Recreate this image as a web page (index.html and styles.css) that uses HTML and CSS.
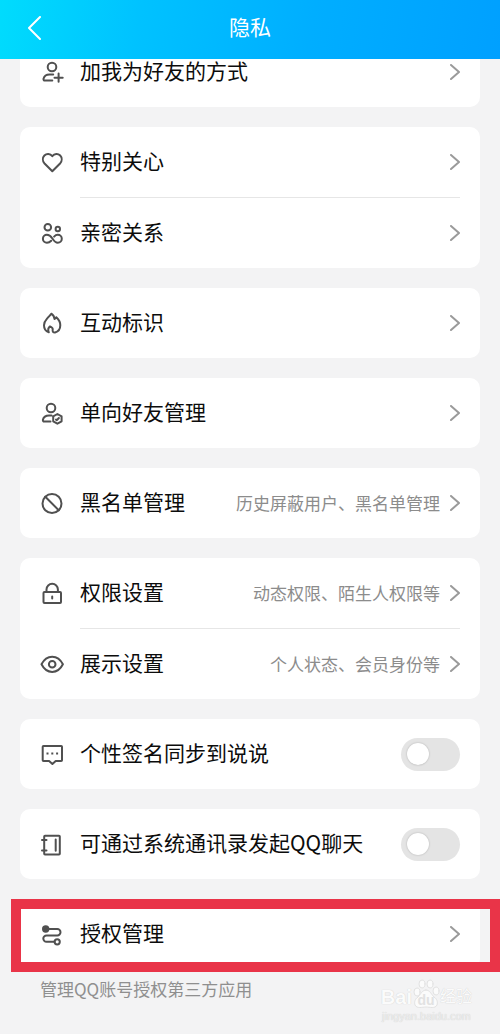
FILE: index.html
```html
<!DOCTYPE html>
<html lang="zh-CN">
<head>
  <meta charset="UTF-8">
  <meta name="viewport" content="width=device-width, initial-scale=1.0">
  <title>隐私</title>
  <link rel="stylesheet" href="styles.css">
</head>
<body>

  <svg class="sprite" aria-hidden="true">
    <symbol id="arrow" viewBox="0 0 10 16"><path d="M1 1l8 7-8 7"/></symbol>
  </svg>

  <!-- 顶部导航 -->
  <header class="header">
    <button class="back-button" type="button" aria-label="返回">
      <svg viewBox="0 0 14 24"><path d="M13 1L2 12l11 11"/></svg>
    </button>
    <h1>隐私</h1>
  </header>

  <!-- 设置列表 -->
  <main class="settings">
    <section class="card">
      <a class="row" href="#">
        <svg class="icon" viewBox="0 0 24 24"><circle cx="12" cy="7" r="4.300"/><path d="M13.200 14.600H9.500c-3 0-5.300 1.700-6 4.200-.2 1 .4 1.700 1.300 1.700h7.500M18.600 13.600v8.200M14.500 17.700h8.200"/></svg>
        <span class="label">加我为好友的方式</span>
        <svg class="arrow"><use href="#arrow"/></svg>
      </a>
    </section>

    <section class="card">
      <a class="row" href="#">
        <svg class="icon" viewBox="0 0 24 24"><path d="M12.300 21.200L4.300 13.200C2.500 11 2.400 7.600 4.400 5.500c2.200-2.300 5.700-2.200 7.900.6 2.200-2.800 5.700-2.900 7.900-.6 2 2.100 1.900 5.500.1 7.700z"/></svg>
        <span class="label">特别关心</span>
        <svg class="arrow"><use href="#arrow"/></svg>
      </a>
      <a class="row" href="#">
        <svg class="icon" viewBox="0 0 24 24"><circle cx="7.800" cy="6.200" r="3.300"/><circle cx="17.800" cy="8" r="2.200"/><path d="M11.200 19.800c-1.200 1.300-2.500 2-4.300 2a4 4 0 0 1 0-8c2.500 0 4 1.600 5.500 3.700 1.500 2.300 3 4.300 5.400 4.300a4 4 0 0 0 0-8c-1.600 0-2.700.7-3.700 1.800"/></svg>
        <span class="label">亲密关系</span>
        <svg class="arrow"><use href="#arrow"/></svg>
      </a>
    </section>

    <section class="card">
      <a class="row" href="#">
        <svg class="icon" viewBox="0 0 24 24"><path d="M8.800 21.300C5.500 20.200 4 17.300 4 14.200c0-3.500 1.600-5 3.400-7C8.800 5.500 10.300 4.300 11.300 2.700c2 1.300 3 3 3.200 5.300.9-.3 1.400-.9 1.800-1.800 2.500 2.200 4 4.800 4 8 0 3.600-1.900 6.300-5.300 7.300-1.900.1-2.700-1-2.300-2.700.3-1.400-.7-2.600-2.700-3.400-1.700 1.300-2.300 3.300-1.200 5.900z"/></svg>
        <span class="label">互动标识</span>
        <svg class="arrow"><use href="#arrow"/></svg>
      </a>
    </section>

    <section class="card">
      <a class="row" href="#">
        <svg class="icon" viewBox="0 0 24 24"><circle cx="11" cy="7" r="4.300"/><path d="M11.500 14.500H9c-3.300 0-5.500 1.800-6.100 4.300-.2 1 .4 1.700 1.300 1.700h6.300M17.400 13l4.200 2.400v4.900l-4.200 2.400-4.200-2.400v-4.900z"/><path d="M16 18.600l.9.600 2-2.200"/></svg>
        <span class="label">单向好友管理</span>
        <svg class="arrow"><use href="#arrow"/></svg>
      </a>
    </section>

    <section class="card">
      <a class="row" href="#">
        <svg class="icon" viewBox="0 0 24 24"><circle cx="12" cy="12.500" r="9.500"/><path d="M5.300 5.800l13.400 13.400"/></svg>
        <span class="label">黑名单管理</span>
        <span class="note">历史屏蔽用户、黑名单管理</span>
        <svg class="arrow"><use href="#arrow"/></svg>
      </a>
    </section>

    <section class="card">
      <a class="row" href="#">
        <svg class="icon" viewBox="0 0 24 24"><rect x="3.500" y="11" width="17.500" height="11" rx="1"/><path d="M6.500 11V8.500a5.700 5.700 0 0 1 11.400 0V11M12.200 15.500v2"/></svg>
        <span class="label">权限设置</span>
        <span class="note">动态权限、陌生人权限等</span>
        <svg class="arrow"><use href="#arrow"/></svg>
      </a>
      <a class="row" href="#">
        <svg class="icon" viewBox="0 0 24 24"><path d="M1.500 12.300C4 7.300 7.800 4.700 12.200 4.700s8.200 2.600 10.700 7.600c-2.500 5-6.300 7.600-10.700 7.600S4 17.300 1.500 12.300z"/><circle cx="12.200" cy="12.300" r="3.300"/></svg>
        <span class="label">展示设置</span>
        <span class="note">个人状态、会员身份等</span>
        <svg class="arrow"><use href="#arrow"/></svg>
      </a>
    </section>

    <section class="card">
      <div class="row">
        <svg class="icon" viewBox="0 0 24 24"><path d="M3.500 4h17.700q.8 0 .8.800v13.400q0 .8-.8.800h-5.500l-3.300 3-3.300-3H3.500q-.8 0-.8-.8V4.800q0-.8.800-.8z"/><path class="dots" d="M6.500 11.500h2M11.300 11.500h2M16.100 11.500h2"/></svg>
        <label class="label" for="syncSign">个性签名同步到说说</label>
        <input class="switch" type="checkbox" id="syncSign">
      </div>
    </section>

    <section class="card">
      <div class="row">
        <svg class="icon" viewBox="0 0 24 24"><path d="M5 3.800h14q.8 0 .8.800v17.100q0 .8-.8.800H5q-.8 0-.8-.8V4.600q0-.8.800-.8zM15.700 7.500v11.300M2 8h4.500M2 18.500h4.500"/></svg>
        <label class="label" for="contactChat">可通过系统通讯录发起QQ聊天</label>
        <input class="switch" type="checkbox" id="contactChat">
      </div>
    </section>

    <section class="card marked">
      <a class="row" href="#">
        <svg class="icon" viewBox="0 0 24 24"><circle class="solid" cx="5.700" cy="7" r="2.700"/><path d="M6 7h11.300a3.200 3.200 0 0 1 0 6.400H6.500a3.200 3.200 0 0 0 0 6.400h8"/><circle cx="17.200" cy="19.800" r="2.600"/></svg>
        <span class="label">授权管理</span>
        <svg class="arrow"><use href="#arrow"/></svg>
      </a>
    </section>
  </main>

  <!-- 底部说明和水印 -->
  <footer class="footer">
    <p class="hint">管理QQ账号授权第三方应用</p>
    <div class="watermark">
      <div class="brand">
        <span>Bai</span>
        <span class="paw">
          <svg viewBox="0 0 28 30"><ellipse cx="5" cy="13" rx="3" ry="4"/><ellipse cx="10" cy="5" rx="3" ry="4"/><ellipse cx="18" cy="5" rx="3" ry="4"/><ellipse cx="24" cy="12" rx="3" ry="4"/><path d="M14 11c4 0 5 4 8 7 3 2 4 5 3 8-2 4-7 2-11 2s-9 2-11-2c-1-3 0-6 3-8 3-3 4-7 8-7z"/></svg>
          <span class="du">du</span>
        </span>
        <span class="jingyan">经验</span>
      </div>
      <div class="site">jingyan.baidu.com</div>
    </div>
  </footer>

</body>
</html>
```

FILE: styles.css
```css
/* ===== General Styles ===== */
* {
  box-sizing: border-box;
}

body {
  margin: 0;
  min-height: 100vh;
  background-color: #f3f3f4;
  color: #0c0c0c;
  font-family: "Noto Sans CJK SC", sans-serif;
}

svg {
  fill: none;
  stroke-linecap: round;
  stroke-linejoin: round;
}

.sprite {
  display: none;
}

/* ===== Header ===== */
.header {
  position: sticky;
  top: 0;
  z-index: 2;
  display: grid;
  grid-template-columns: 40px 1fr 40px;
  align-items: center;
  height: 59px;
  padding: 0 14px 4px;
  background: linear-gradient(100deg, #00dcfd, #00c2ff 28%, #00aeff 62%, #00a0ff);
  color: white;
}

.header h1 {
  margin: 0;
  padding-bottom: 4px;
  font-size: 21px;
  font-weight: 400;
  line-height: 30px;
  text-align: center;
}

.back-button {
  width: 40px;
  height: 40px;
  padding: 0;
  border: none;
  background: none;
  cursor: pointer;
}

.back-button svg {
  display: block;
  width: 14px;
  height: 24px;
  margin: 0 auto;
  stroke: white;
  stroke-width: 2;
}

/* ===== Settings ===== */
/* the first card is scrolled halfway under the header */
.settings {
  display: flex;
  flex-direction: column;
  gap: 20px;
  margin-top: -22px;
  padding: 0 20px;
}

.card {
  background-color: white;
  border-radius: 10px;
}

.row {
  display: flex;
  align-items: center;
  height: 70px;
  padding: 0 20px;
  color: inherit;
  text-decoration: none;
}

.row + .row {
  position: relative;
  height: 71px;
}

.row + .row::before {
  content: "";
  position: absolute;
  top: 0;
  left: 60px;
  right: 20px;
  height: 1px;
  background-color: #e6e6e6;
}

.icon {
  flex: none;
  width: 24px;
  height: 24px;
  margin-right: 16px;
  stroke: #505050;
  stroke-width: 2;
}

.icon .dots {
  stroke-linecap: butt;
}

.icon .solid {
  fill: #505050;
}

.label {
  flex: 1;
  padding-bottom: 4px;
  font-size: 21px;
  line-height: 30px;
  white-space: nowrap;
}

.note {
  color: #8c8c8c;
  font-size: 17px;
  line-height: 24px;
  white-space: nowrap;
}

.arrow {
  flex: none;
  width: 10px;
  height: 16px;
  margin-left: 10px;
  stroke: #9a9a9a;
  stroke-width: 2;
}

.switch {
  appearance: none;
  display: flex;
  align-items: center;
  width: 59px;
  height: 33px;
  margin: 0;
  padding: 0 6px;
  border-radius: 17px;
  background-color: #e4e4e4;
  cursor: pointer;
}

.switch::before {
  content: "";
  width: 22px;
  height: 22px;
  border-radius: 50%;
  background-color: white;
  box-shadow: 0 0 2px rgba(0, 0, 0, 0.25);
}

.switch:checked {
  justify-content: flex-end;
  background-color: #00a8ff;
}

/* ===== Red frame ===== */
.marked {
  position: relative;
}

.marked::after {
  content: "";
  position: absolute;
  top: 0;
  right: -20px;
  bottom: -3px;
  left: -9px;
  border: 10px solid #e93448;
  pointer-events: none;
}

/* ===== Footer ===== */
.footer {
  display: flex;
  justify-content: space-between;
  align-items: flex-start;
  padding: 8px 28px 0 40px;
}

.hint {
  margin: 0;
  color: #8f8f8f;
  font-size: 17px;
  line-height: 24px;
}

.watermark {
  padding-top: 2px;
  color: #fbfbfb;
  font-family: "Liberation Sans", "Noto Sans CJK SC", sans-serif;
  text-shadow: 0 0 1px #c4c4c4;
}

.brand {
  display: flex;
  align-items: flex-end;
  height: 30px;
  font-size: 20px;
  font-weight: 700;
  line-height: 24px;
}

.paw {
  position: relative;
  width: 28px;
  height: 30px;
}

.paw svg {
  display: block;
  fill: #fbfbfb;
  stroke: #e2e2e2;
  stroke-width: 1;
}

.du {
  position: absolute;
  right: 0;
  bottom: 0;
  left: 0;
  color: #e2e2e2;
  font-size: 14px;
  line-height: 18px;
  text-align: center;
  text-shadow: none;
}

.jingyan {
  font-size: 16px;
  font-weight: 400;
}

.site {
  color: #eeeeee;
  font-size: 11px;
  line-height: 14px;
  text-align: center;
}
```
